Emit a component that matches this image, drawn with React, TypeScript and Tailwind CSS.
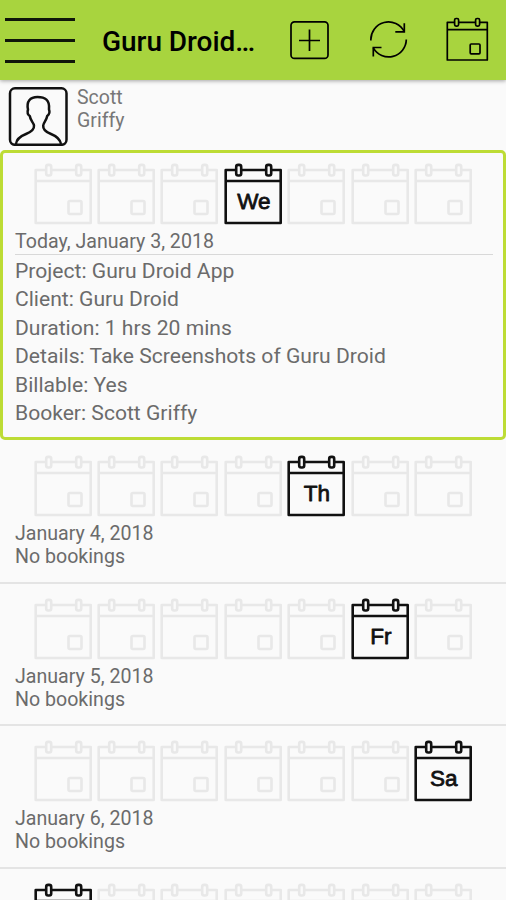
import React from 'react';

interface Day {
  date: string;
  label: string;
  index: number;
}

interface CalendarIconProps {
  label?: string;
  active?: boolean;
}

const UPCOMING_DAYS: Day[] = [
  { date: 'January 4, 2018', label: 'Th', index: 4 },
  { date: 'January 5, 2018', label: 'Fr', index: 5 },
  { date: 'January 6, 2018', label: 'Sa', index: 6 }
];

const BOOKING_DETAILS = [
  'Project: Guru Droid App',
  'Client: Guru Droid',
  'Duration: 1 hrs 20 mins',
  'Details: Take Screenshots of Guru Droid',
  'Billable: Yes',
  'Booker: Scott Griffy'
];

const CalendarIcon: React.FC<CalendarIconProps> = ({ label, active = false }) => (
  <svg
    viewBox="0 0 60 62"
    className={`h-[62px] w-[60px] ${active ? 'text-[#111111]' : 'text-[#e8e8e8]'}`}
    fill="none"
    stroke="currentColor"
    strokeWidth="2.6"
    strokeLinejoin="round"
  >
    <path d="M13 7H2.7V60H57.7V7H48.5M18.5 7H43M2.7 18H57.7" />
    <rect x="13.2" y="1.9" width="5" height="10.6" rx="2" />
    <rect x="43.2" y="1.9" width="5" height="10.6" rx="2" />
    {active && label && (
      <text
        x="30.8"
        y="46.4"
        textAnchor="middle"
        fill="currentColor"
        strokeWidth="0.8"
        className="font-['Liberation_Sans',sans-serif] text-[22.5px]"
      >
        {label}
      </text>
    )}
    {!active && <rect x="35.5" y="38" width="13" height="13" rx="1.5" />}
  </svg>
);

// One icon per weekday, Sunday first
const WeekStrip: React.FC<{ label?: string; index: number }> = ({ label, index }) => (
  <div className="mx-auto grid w-[444px] grid-cols-7">
    {[0, 1, 2, 3, 4, 5, 6].map((day) => (
      <div key={day} className="pl-[1.5px]">
        <CalendarIcon active={day === index} label={label} />
      </div>
    ))}
  </div>
);

const Header: React.FC = () => (
  <header className="flex h-20 shrink-0 items-center bg-[#a8d43e] pl-[5px] text-black shadow-[0_1px_4px_rgba(0,0,0,0.35)]">
    <button type="button" aria-label="Menu" className="flex w-[70px] flex-col gap-[18px]">
      <span className="h-[3px] bg-[#10160a]" />
      <span className="h-[3px] bg-[#10160a]" />
      <span className="h-[3px] bg-[#10160a]" />
    </button>
    <h1 className="ml-[27px] w-[187px] whitespace-nowrap pt-[4px] text-[28px] font-medium leading-8 tracking-[-0.05px]">Guru Droid…</h1>
    <svg viewBox="0 0 40 40" className="size-10 shrink-0" fill="none" stroke="currentColor" strokeWidth="1.7">
      <rect x="2" y="1.8" width="37" height="36.6" rx="3.5" />
      <path d="M20.5 9.5V31M10 20.5H31" />
    </svg>
    <svg viewBox="0 0 40 40" className="ml-[39px] size-10 shrink-0" fill="none" stroke="currentColor" strokeWidth="1.7">
      <path d="M2.9 20.5A17.6 17.6 0 0 1 36.3 11.8M38.3 19.5A17.6 17.6 0 0 1 5.3 27.8" />
      <path d="M36.3 3.3V11.8H27.3M5.3 36.6V27.5H13.5" />
    </svg>
    <svg viewBox="0 0 44 46" className="ml-[37px] h-[46px] w-11 shrink-0" fill="none" stroke="currentColor" strokeWidth="1.7" strokeLinejoin="round">
      <path d="M9.4 5.3H2.3V43H42.3V5.3H34.5M13.5 5.3H30.5M2.3 12.6H42.3" />
      <rect x="9.6" y="1.5" width="4" height="7.6" rx="1.5" />
      <rect x="30.6" y="1.5" width="4" height="7.6" rx="1.5" />
      <rect x="25.2" y="27" width="9.8" height="9.8" rx="1" />
    </svg>
  </header>
);

const UserBar: React.FC = () => (
  <div className="flex h-[70px] shrink-0 pl-2 pt-[6px]">
    <svg viewBox="0 0 60 60" className="size-[60px]" fill="none" stroke="#111111" strokeWidth="2.5" strokeLinejoin="round">
      <rect x="2" y="2.3" width="56.5" height="56.5" rx="5" />
      <path d="M8 58C8.5 52.5 13 50 18 48C23 46 26.5 43.5 26 39.5C25.5 36.5 22.3 34.5 21.8 30C19.5 28.5 19.2 26 20 23.5C18.3 15.5 22 11 29.5 11C37 11 42 14 41 23.5C42 26 41.2 28.5 39.2 30C38.5 34.5 35.5 36.5 35.2 39.5C34.8 43.5 38 46 43 48C48 50 52 52.5 53 58" />
    </svg>
    <p className="ml-[9px] text-[19.5px] leading-[23px] text-[#777777]">
      Scott
      <br />
      Griffy
    </p>
  </div>
);

const App: React.FC = () => (
  <div className="flex h-[900px] w-[506px] flex-col overflow-hidden bg-[#fafafa] font-['Roboto',sans-serif] text-[#6b6b6b]">
    <Header />
    <UserBar />

    {/* Today's booking */}
    <section className="h-[290px] shrink-0 rounded-[5px] border-[3px] border-[#bddc35] pt-[10px]">
      <WeekStrip label="We" index={3} />
      <div className="pl-3 pr-2.5">
        <h2 className="h-[30px] border-b border-[#d8d8d8] pt-[5px] text-[19.6px] leading-[23px]">Today, January 3, 2018</h2>
        <ul className="pt-[2px] text-[21.1px] leading-[28.4px]">
          {BOOKING_DETAILS.map((detail) => (
            <li key={detail}>{detail}</li>
          ))}
        </ul>
      </div>
    </section>

    {/* Upcoming days */}
    <div className="shrink-0 pt-px">
      {UPCOMING_DAYS.map((day) => (
        <section key={day.date} className="h-[142.7px] border-b-2 border-[#e4e4e4] pt-[14px]">
          <WeekStrip label={day.label} index={day.index} />
          <div className="px-[15px] pt-[5px] text-[19.6px] leading-[23px]">
            <h2>{day.date}</h2>
            <p>No bookings</p>
          </div>
        </section>
      ))}
      {/* Start of the next week */}
      <div className="pt-[14px]">
        <WeekStrip index={0} />
      </div>
    </div>
  </div>
);

export default App;
